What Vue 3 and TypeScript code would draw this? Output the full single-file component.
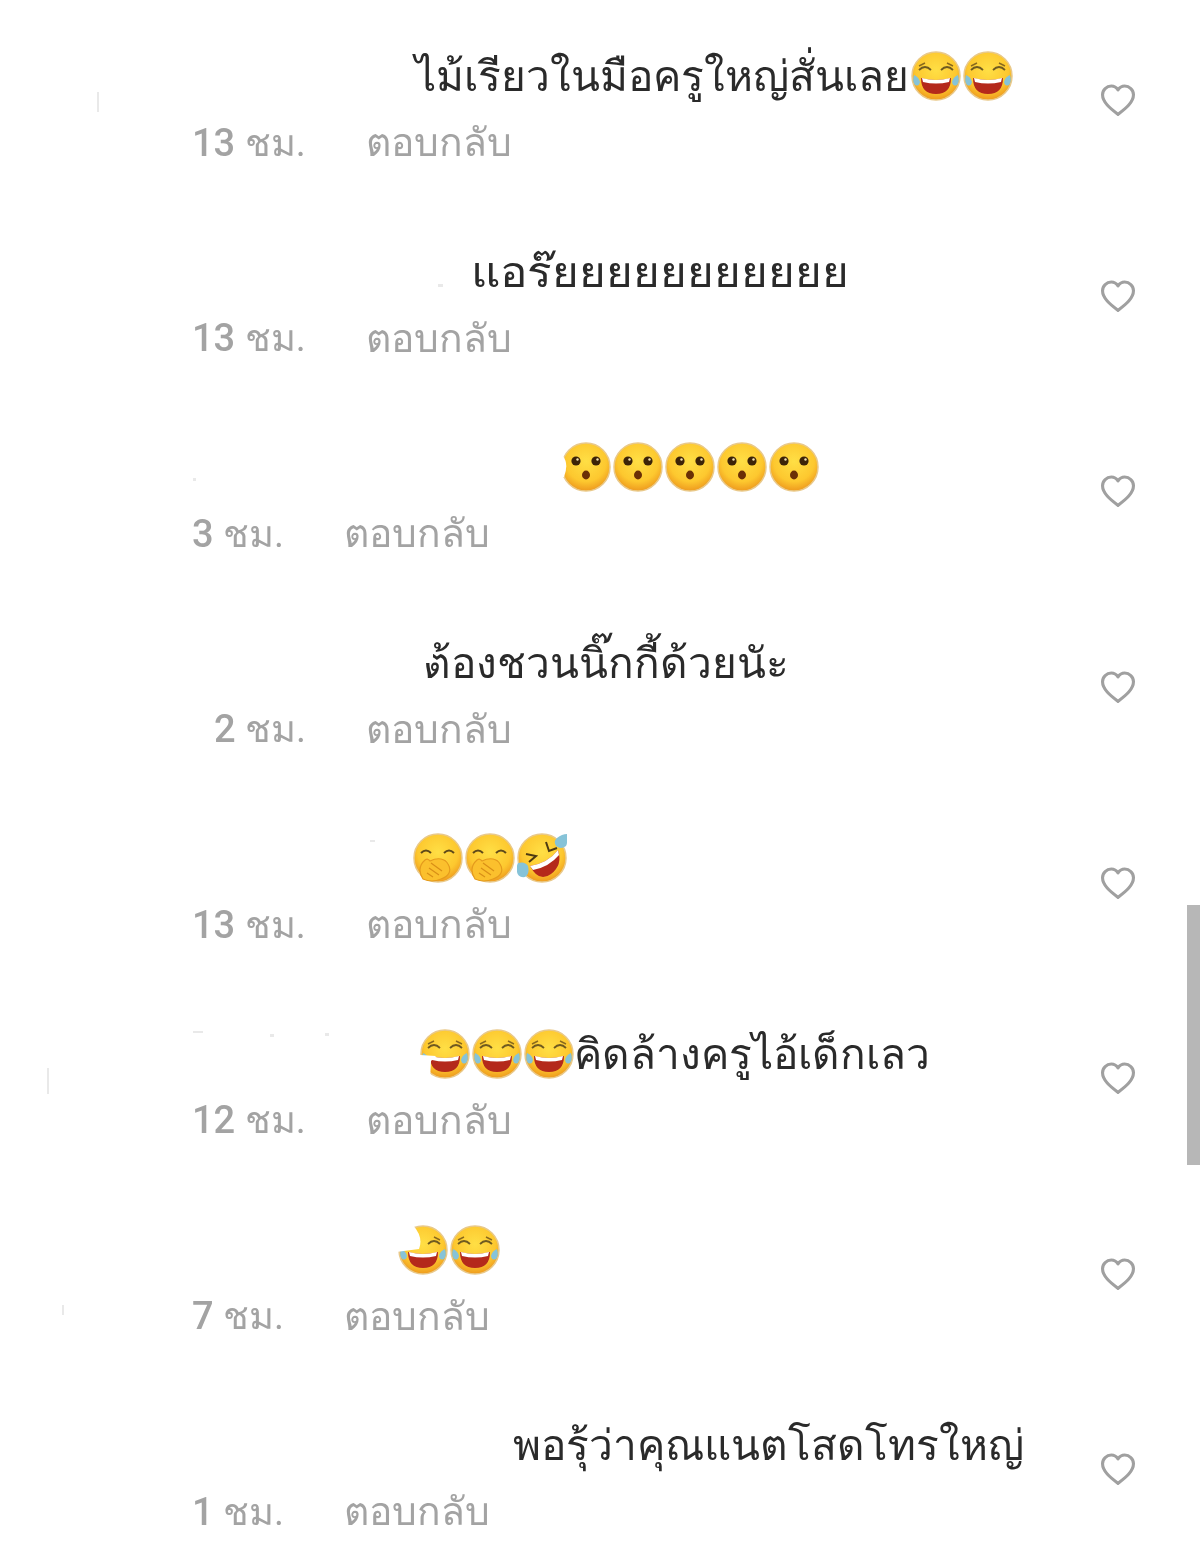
<template>
  <div class="page">
    <svg class="defs" width="0" height="0" aria-hidden="true">
      <defs>
        <radialGradient id="skin" cx="50%" cy="38%" r="62%">
          <stop offset="0%" stop-color="#ffdf45" />
          <stop offset="68%" stop-color="#fdc82f" />
          <stop offset="100%" stop-color="#ee9a1e" />
        </radialGradient>
        <symbol id="face" viewBox="0 0 50 50">
          <circle cx="25" cy="25" r="24" fill="url(#skin)" stroke="#e9c98a" stroke-width="1.500" />
        </symbol>
        <symbol id="joy" viewBox="0 0 50 50">
          <use href="#face" width="50" height="50" />
          <path d="M8 19q6-6 12 0M30 19q6-6 12 0" fill="none" stroke="#6f5a20" stroke-width="1.800" />
          <path d="M8 15l6-3M42 15l-6-3" fill="none" stroke="#8a6a1e" stroke-width="1.400" />
          <path d="M10 27q15 4 30 0q0 16-15 16T10 27z" fill="#b4291b" />
          <path d="M11 27q14 4 28 0l-1 4q-13 3-26 0z" fill="#fff" />
          <path d="M3 24q5 2 6 7q-1 5-5 3q-3-4-1-10zM47 24q-5 2-6 7q1 5 5 3q3-4 1-10z" fill="#86c3d8" />
        </symbol>
        <symbol id="joy-cut-low" viewBox="0 0 50 50">
          <use href="#joy" width="50" height="50" />
          <path d="M-1 26L16 27L11 32L10 51H-1z" fill="#fff" />
        </symbol>
        <symbol id="joy-cut-high" viewBox="0 0 50 50">
          <use href="#joy" width="50" height="50" />
          <path d="M-1-1H14Q26 12 21 24L-1 27z" fill="#fff" />
        </symbol>
        <symbol id="wow" viewBox="0 0 50 50">
          <use href="#face" width="50" height="50" />
          <circle cx="15" cy="19" r="4.600" fill="#3c2308" />
          <circle cx="35" cy="19" r="4.600" fill="#3c2308" />
          <circle cx="16.500" cy="17.500" r="1.200" fill="#f3e3b0" />
          <circle cx="36.500" cy="17.500" r="1.200" fill="#f3e3b0" />
          <ellipse cx="25" cy="33" rx="4" ry="4.400" fill="#6a2f06" />
        </symbol>
        <symbol id="wow-cut" viewBox="0 0 50 50">
          <use href="#wow" width="50" height="50" />
          <path d="M-1 14H2Q8 22 3 35H-1z" fill="#fff" />
        </symbol>
        <symbol id="hush" viewBox="0 0 50 50">
          <use href="#face" width="50" height="50" />
          <path d="M8 20q5-5 10 0M31 20q5-5 10 0" fill="none" stroke="#5f4a1a" stroke-width="2" />
          <path d="M10 46Q3 35 12 27q3-2 5 1q6-3 11-2q5 1 7 5q3 5 1 9q-2 4-8 6q-9 4-18 0z" fill="#fbc02d" stroke="#e59b1d" stroke-width="1.200" />
          <path d="M18 30l11 8M16 35l10 7M14 40l6 4" fill="none" stroke="#d98f17" stroke-width="1.200" />
        </symbol>
        <symbol id="rofl" viewBox="0 0 50 50">
          <use href="#face" width="50" height="50" />
          <path d="M9 21l10 2l-7 6M29 9l3 9l8-3" fill="none" stroke="#4d3a12" stroke-width="2" />
          <path d="M13 33Q31 30 41 17q5 15-7 24T13 33z" fill="#b4291b" />
          <path d="M13 33Q31 30 41 17l1 5Q32 34 16 37z" fill="#fff" />
          <path d="M1 30q7-2 10 3q2 8-3 11q-7 1-8-5q-1-5 1-9zM50 1q1 8-1 12q-5 4-10 0q-3-5 1-8q5-4 10-4z" fill="#86c3d8" />
        </symbol>
        <symbol id="heart" viewBox="0 0 34 32">
          <path d="M17 29.500C10 24 2 18 2 10.500C2 5.500 6 2 10.500 2C13.200 2 15.500 3.400 17 5.800C18.500 3.400 20.800 2 23.500 2C28 2 32 5.500 32 10.500C32 18 24 24 17 29.500Z" fill="none" stroke="#a0a0a0" stroke-width="3" stroke-linejoin="round" />
        </symbol>
      </defs>
    </svg>

    <div v-for="row in rows" :key="row.id" class="comment">
      <div class="comment-main">
        <div class="message" :class="{ wide: row.wide }" :style="{ paddingLeft: row.textLeft + 'px' }">
          <template v-for="(part, i) in row.parts" :key="i">
            <svg v-if="part.icon" class="emoji" viewBox="0 0 50 50"><use :href="'#' + part.icon" /></svg>
            <span v-else class="text">{{ part.text }}</span>
          </template>
        </div>
        <div class="meta" :style="{ paddingLeft: row.metaLeft + 'px' }">
          <span class="time"><b>{{ row.hours }}</b> ชม.</span>
          <span class="reply">ตอบกลับ</span>
        </div>
      </div>
      <svg class="heart" viewBox="0 0 34 32"><use href="#heart" /></svg>
    </div>

    <div class="scroll-thumb"></div>
    <div class="patch"></div>
    <i
      v-for="(s, i) in specks"
      :key="'s' + i"
      class="speck"
      :style="{ left: s[0] + 'px', top: s[1] + 'px', width: s[2] + 'px', height: s[3] + 'px' }"
    ></i>
  </div>
</template>

<script setup lang="ts">
type Part = { text?: string; icon?: string }

const emo = (...names: string[]): Part[] => names.map((icon) => ({ icon }))

const rows: { id: number; textLeft: number; metaLeft: number; hours: number; wide?: boolean; parts: Part[] }[] = [
  { id: 1, textLeft: 415, metaLeft: 192, hours: 13, parts: [{ text: 'ไม้เรียวในมือครูใหญ่สั่นเลย' }, ...emo('joy', 'joy')] },
  { id: 2, textLeft: 471, metaLeft: 192, hours: 13, wide: true, parts: [{ text: 'แอร๊ยยยยยยยยยยย' }] },
  { id: 3, textLeft: 561, metaLeft: 192, hours: 3, parts: emo('wow-cut', 'wow', 'wow', 'wow', 'wow') },
  { id: 4, textLeft: 423, metaLeft: 214, hours: 2, parts: [{ text: 'ต้องชวนนิ๊กกี้ด้วยนัะ' }] },
  { id: 5, textLeft: 413, metaLeft: 192, hours: 13, parts: emo('hush', 'hush', 'rofl') },
  { id: 6, textLeft: 420, metaLeft: 192, hours: 12, parts: [...emo('joy-cut-low', 'joy', 'joy'), { text: 'คิดล้างครูไอ้เด็กเลว' }] },
  { id: 7, textLeft: 398, metaLeft: 192, hours: 7, parts: emo('joy-cut-high', 'joy') },
  { id: 8, textLeft: 513, metaLeft: 192, hours: 1, parts: [{ text: 'พอรุ้ว่าคุณแนตโสดโทรใหญ่' }] },
]

// leftovers of the blurred-out usernames
const specks = [
  [97, 92, 2, 20],
  [47, 1068, 2, 26],
  [193, 478, 3, 3],
  [438, 284, 5, 3],
  [370, 840, 5, 2],
  [193, 1031, 10, 2],
  [270, 1034, 4, 3],
  [325, 1033, 4, 3],
  [62, 1305, 2, 10],
]
</script>

<style scoped>
.page {
  position: relative;
  width: 1200px;
  height: 1565px;
  padding-top: 2px;
  box-sizing: border-box;
  overflow: hidden;
  background: #fff;
  font-family: "Roboto", "Noto Sans", "DejaVu Sans", "Liberation Sans", sans-serif;
}

.defs {
  position: absolute;
}

.comment {
  display: flex;
  align-items: center;
  height: 195.6px;
  padding-right: 64px;
  box-sizing: border-box;
  filter: blur(0.5px);
}

.comment-main {
  flex: 1;
  display: flex;
  flex-direction: column;
  align-self: flex-start;
  padding-top: 44px;
}

.message {
  display: flex;
  align-items: center;
  height: 60px;
  font-size: 42.4px;
  color: #2a2a2a;
  white-space: nowrap;
}

.message.wide .text {
  display: inline-block;
  transform: scaleX(1.08);
  transform-origin: left center;
}

.emoji {
  width: 50px;
  height: 50px;
  margin-right: 2px;
  flex-shrink: 0;
}

.emoji + .text {
  margin-left: -2px;
}

.text + .emoji {
  margin-left: 2px;
}

.meta {
  display: flex;
  margin-top: 11px;
  height: 50px;
  align-items: center;
  color: #a3a3a3;
  white-space: nowrap;
}

.time {
  margin-right: 60px;
  font-size: 38px;
}

.time b {
  font-weight: 500;
}

.reply {
  font-size: 39px;
}

.heart {
  width: 36px;
  height: 33px;
  margin-top: 2px;
  flex-shrink: 0;
}

.scroll-thumb {
  position: absolute;
  left: 1187px;
  top: 905px;
  width: 13px;
  height: 260px;
  background: #b7b7b7;
}

/* rubbed-out corner of the first letter in the fourth comment */
.patch {
  position: absolute;
  left: 421px;
  top: 646px;
  width: 12px;
  height: 17px;
  background: #fff;
}

.speck {
  position: absolute;
  background: #e9e9e9;
}
</style>

<style>
html,
body {
  margin: 0;
  background: #fff;
}
</style>
